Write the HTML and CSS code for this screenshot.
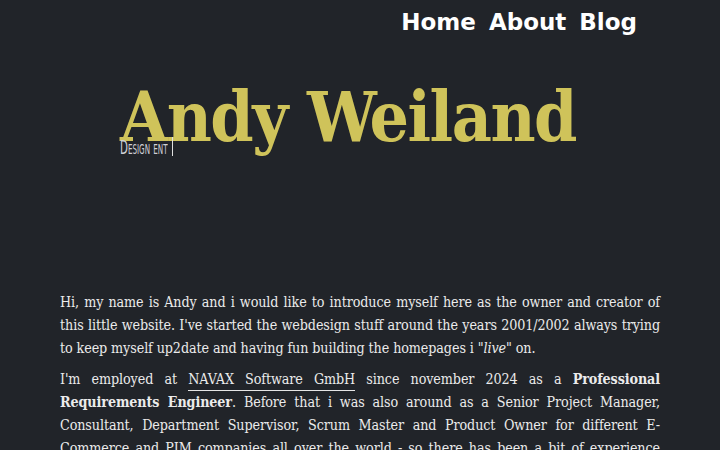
FILE: index.html
```html
<!DOCTYPE html>
<html lang="en">
<head>
<meta charset="utf-8">
<title>Andy Weiland</title>
<link rel="stylesheet" href="styles.css">
</head>
<body>
<header class="top">
  <nav class="nav">
    <a class="nav-link" href="#">Home</a>
    <a class="nav-link" href="#">About</a>
    <a class="nav-link" href="#">Blog</a>
  </nav>
</header>
<section class="hero">
  <h1 class="title">Andy Weiland</h1>
  <div class="subtitle"><span class="typed">Design ent</span><span class="cursor"></span></div>
</section>
<main class="content">
  <p class="para">Hi, my name is Andy and i would like to introduce myself here as the owner and creator of this little website. I've started the webdesign stuff around the years 2001/2002 always trying to keep myself up2date and having fun building the homepages i "<em>live</em>" on.</p>
  <p class="para">I'm employed at <a class="link" href="#">NAVAX Software GmbH</a> since november 2024 as a <strong>Professional Requirements Engineer</strong>. Before that i was also around as a Senior Project Manager, Consultant, Department Supervisor, Scrum Master and Product Owner for different E-Commerce and PIM companies all over the world - so there has been a bit of experience gathered over the years.</p>
</main>
</body>
</html>
```
FILE: styles.css
```css
html, body {
  margin: 0;
  padding: 0;
  background: #212429;
}
body {
  width: 720px;
  height: 450px;
  overflow: hidden;
  color: #ebebeb;
  font-family: "DejaVu Serif Condensed", "DejaVu Serif", serif;
}
.top {
  display: flex;
  justify-content: flex-end;
  padding: 6px 83px 0 0;
}
.nav {
  display: flex;
  gap: 13px;
}
.nav-link {
  font-family: "DejaVu Sans", sans-serif;
  font-weight: bold;
  font-size: 23px;
  line-height: 32px;
  color: #ffffff;
  text-decoration: none;
}
.hero {
  padding: 39px 0 0 120px;
  height: 220px;
  box-sizing: border-box;
}
.title {
  margin: 0;
  font-size: 69px;
  letter-spacing: -1.5px;
  line-height: 80px;
  font-weight: bold;
  color: #cfc35a;
}
.subtitle {
  display: flex;
  align-items: center;
  margin-top: -20px;
  height: 19px;
}
.typed {
  font-family: "DejaVu Sans Condensed", sans-serif;
  font-variant: small-caps;
  font-size: 20px;
  color: #d0d0d6;
  transform: scaleX(0.57);
  transform-origin: left center;
  width: 52px;
  white-space: nowrap;
}
.cursor {
  width: 1px;
  height: 19px;
  background: #e0e0e0;
  margin-left: 0;
}
.content {
  padding: 33px 60px 0 60px;
}
.para {
  margin: 0 0 8px 0;
  font-size: 14.2px;
  letter-spacing: -0.1px;
  line-height: 23px;
  text-align: justify;
}
.link {
  color: inherit;
  text-decoration: none;
  border-bottom: 1px solid #e6e6e6;
  padding-bottom: 3px;
}
```
